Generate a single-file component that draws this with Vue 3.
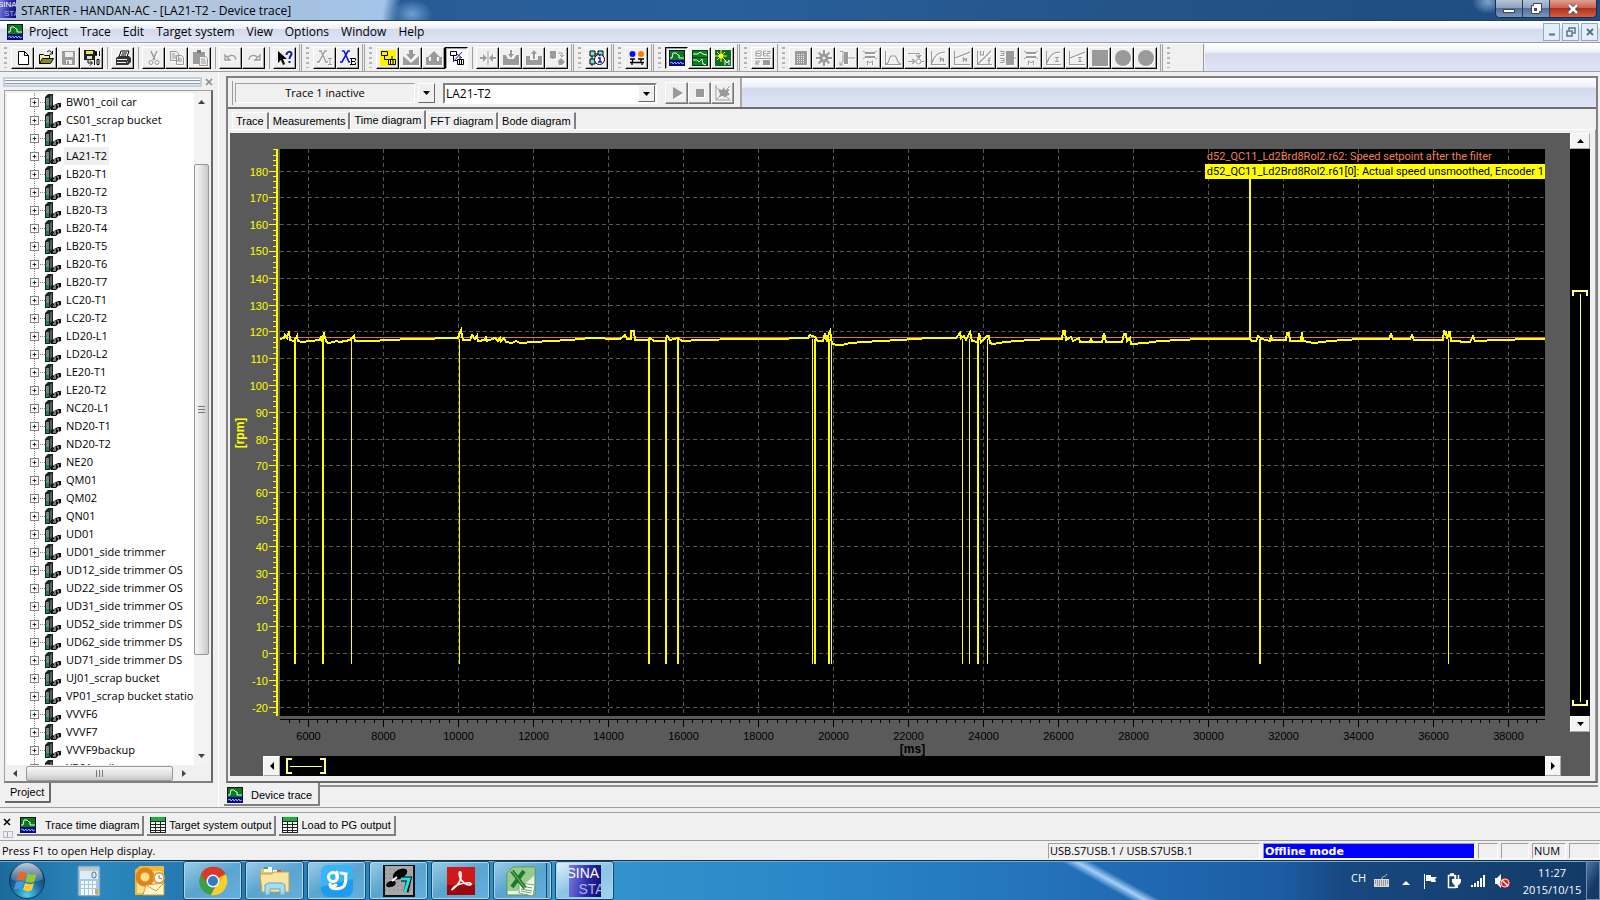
<script setup>
import { ref } from 'vue'

const menus = ['Project', 'Trace', 'Edit', 'Target system', 'View', 'Options', 'Window', 'Help']

const scope = '<rect width="16" height="16" fill="#0a1a10"/><rect x="1" y="1" width="14" height="9" fill="#0b7a1e"/><path d="M1 8h2l1-5h3l2 2h1v3h5" stroke="#e8ffe8" fill="none"/><rect y="10" width="16" height="6" fill="#0a0a80"/><path d="M1 13l2-1 1 2 2-2 1 2 2-2 1 2 2-2 1 2 2-1" stroke="#8fb4ff" fill="none"/>'
const sheet = '<rect x="0" y="0" width="16" height="16" fill="#222"/><rect x="1" y="0" width="14" height="4" fill="#18b040"/><path d="M1 5h4v2H1zM6 5h4v2H6zM11 5h4v2h-4zM1 8h4v2H1zM6 8h4v2H6zM11 8h4v2h-4zM1 11h4v2H1zM6 11h4v2H6zM11 11h4v2h-4zM1 14h4v1H1zM6 14h4v1H6zM11 14h4v1h-4z" fill="#f4f4f4"/>'
const G = '#9a9a9a'

const icons = {
  scope,
  sheet,
  drive: '<path d="M0 3l3-3h5v12l-3 4H0z" fill="#1c2422"/><path d="M1 4h3v7H1z" fill="#7a8480"/><path d="M1 11h3v4H1z" fill="#138078"/><path d="M5 3l2-2v10l-2 2z" fill="#59625f"/><path d="M6 13l3-2 2-1 2-1h3v4l-3 1-2 2H6z" fill="#111"/><path d="M9 12h2M12 11h2M8 14h3M13 13h1" stroke="#ddd"/>',
  new: '<path d="M3.500 1.500h6l4 4v9h-10z" fill="#fff" stroke="#000"/><path d="M9.500 1.500v4h4" fill="none" stroke="#000"/>',
  open: '<path d="M1.500 13.500v-9h4l1 1h5v3" fill="#f6f29a" stroke="#000"/><path d="M1.500 13.500l3-5h11l-3 5z" fill="#8c8c14" stroke="#000"/><path d="M9 2c2-2 4-1 5 1M14.500 1v3h-3" fill="none" stroke="#000"/>',
  save: `<path d="M1 1h13v14H2l-1-1z" fill="${G}"/><path d="M4 2h8v5H4zM5 10h6v4H5z" fill="#eee"/><path d="M6 11h2v3H6z" fill="${G}"/>`,
  saveall: '<path d="M0 0h11v10H0z" fill="#222"/><path d="M2 1h7v3H2z" fill="#e8e44c"/><path d="M3 6h5v3H3z" fill="#ddd"/><path d="M4 10v3h4M6 10.500l2.500 2.500L6 15.500" fill="none" stroke="#000"/><path d="M12.500 1.500h-1v4h1zM15.500 1v5M10.500 9v6M13 9.500h2v5h-2z" fill="none" stroke="#000"/>',
  print: '<path d="M4 7l2-6h8l-2 6z" fill="#fff" stroke="#000"/><path d="M1 8l3-2h10l2 2v4l-3 3H1z" fill="#333"/><path d="M2 9h10v1H2zM2 12h9v1H2z" fill="#eee"/><path d="M7 3h5M6 5h5" stroke="#000"/><path d="M12 12h1" stroke="#e8e400"/>',
  cut: `<path d="M5 1l4 9M11 1L7 10" stroke="${G}" stroke-width="1.500" fill="none"/><circle cx="5" cy="12.500" r="2" fill="none" stroke="${G}"/><circle cx="11" cy="12.500" r="2" fill="none" stroke="${G}"/>`,
  copy: `<path d="M1.500 1.500h6l2 2v7h-8zM7.500 5.500h5l2 2v7h-7z" fill="#efefef" stroke="${G}"/><path d="M3 4h3M3 6h4M3 8h4M9 9h4M9 11h4" stroke="${G}"/>`,
  paste: `<path d="M1 2h12v12H1z" fill="${G}"/><path d="M5 0h4v3H5z" fill="#777"/><path d="M7.500 6.500h6l2 2v7h-8z" fill="#efefef" stroke="${G}"/><path d="M9 9h4M9 11h5M9 13h5" stroke="${G}"/>`,
  undo: `<path d="M2 5v5h5zM4 8c3-4 9-3 9 2" fill="none" stroke="${G}" stroke-width="1.300"/>`,
  redo: `<path d="M14 5v5H9zM12 8C9 4 3 5 3 10" fill="none" stroke="${G}" stroke-width="1.300"/>`,
  help: '<path d="M1 1v12l3-3 2 5 2-1-2-5h4z" fill="#000"/><path d="M9.500 5c0-4 5-4 5-1 0 2-2 2-2 5M12.500 11v2" fill="none" stroke="#0a1ea0" stroke-width="2"/>',
  xi: `<path d="M2 1h2l5 11h2M10 1H8L2 12H0" fill="none" stroke="${G}" stroke-width="1.300"/><path d="M11 8.500h4M13 9v6M11 14.500h4" stroke="${G}"/>`,
  xe: '<path d="M2 1h2l5 11h1M10 1H8L2 12H0" fill="none" stroke="#0a14d2" stroke-width="1.600"/><path d="M10 8.500h5.500v2M11.500 8v7M10 14.500h5.500v-2M12 11.500h3" fill="none" stroke="#000"/>',
  net: '<rect width="16" height="16" fill="#fff200"/><path d="M1.500 1.500h6v4h-6zM4.500 5.500v4h4" fill="none" stroke="#000"/><path d="M8.500 9.500h7v5h-7zM10.500 9v6M13 9v6M12 9V6" fill="none" stroke="#000"/>',
  down: `<path d="M0 6l8 7 8-7v9H0z" fill="${G}"/><path d="M6 0h4v4h3l-5 6-5-6h3z" fill="${G}"/>`,
  up: `<path d="M0 7h3v4h10V7h3v8H0z" fill="${G}"/><path d="M8 1l6 6h-3v5H5V7H2z" fill="${G}"/>`,
  offline: '<path d="M1.500 1.500h6v4h-6zM4.500 5.500v5h4" fill="none" stroke="#000"/><path d="M8.500 9.500h6v5h-6zM10.500 9v6M12.500 9v6M11 9V7" fill="none" stroke="#000"/><path d="M4 12L13 2M8 4l5 4" stroke="#1818c8"/>',
  collapse: `<path d="M8 1v14" stroke="${G}"/><path d="M0 7h3V4l4 4-4 4V9H0zM16 7h-3V4L9 8l4 4V9h3z" fill="${G}"/>`,
  dl: `<path d="M0 5h3l2 4h6l2-4h3v10H0z" fill="${G}"/><path d="M7 0h2v4h2L8 8 5 4h2z" fill="${G}"/>`,
  ul: `<path d="M0 6h4v4h8V6h4v9H0z" fill="${G}"/><path d="M7 9h2V4h2L8 0 5 4h2z" fill="${G}"/>`,
  sync: `<path d="M1 1h6v7l-3 1-3-1zM9 11l3-3 4 4-3 3h-3z" fill="${G}"/><path d="M9 3h4v4M11 5l2 2 2-2" fill="none" stroke="${G}"/>`,
  info: '<path d="M1 1h5v5H1zM9 1h5v5H9zM1 9h5v5H1z" fill="#7ee0e0" stroke="#000"/><path d="M3 6v3M11 6v3M6 4h3M3 14v2" stroke="#000"/><circle cx="10.500" cy="9.500" r="5" fill="#fff" stroke="#000"/><path d="M9 8h2v4M9 12h4M10 5.500h1.500" stroke="#1010c8" fill="none" stroke-width="1.500"/>',
  balls: '<circle cx="3.500" cy="4" r="3" fill="#0808ff"/><circle cx="12" cy="4" r="3" fill="#ff7a00"/><path d="M1 9h5M9 9h6M3.500 9v3M12 9v3M1 12.500h14M3 12v3M13 12v3" stroke="#000" stroke-width="1.300"/>',
  measure: '<rect width="16" height="16" fill="#043a0c"/><rect x="1" y="1" width="14" height="6" fill="#0a8020"/><rect x="1" y="8" width="14" height="7" fill="#0a8020"/><path d="M1 4h5l2-2 3 2 4 1M1 10h4l2 2 3-3 1 5 3 1" stroke="#e8ffe8" fill="none"/>',
  auto: '<rect width="16" height="16" fill="#0a6c1c"/><path d="M6 0v12M0 6h12M2 2l8 8M10 2l-8 8" stroke="#ffff30"/><circle cx="6" cy="6" r="2.500" fill="#ffff30"/><path d="M10 15v-5l2 3 2-3v5" stroke="#fff" fill="none"/>',
  fe: `<path d="M1 3.500h4M3 1h3v5H1V2zM9 1h2M8.500 1v5h2.500M9 3.500h2M12 1.500h3v2h-3v2.500h3M0 8.500h16M1 15v-4h3v2H1l3 2" fill="none" stroke="${G}"/><path d="M8 10h7v5H8z" fill="${G}"/>`,
  grid: `<rect x="2" y="1" width="12" height="14" fill="${G}"/><path d="M4 4.500h8M4 6.500h8M4 8.500h8M4 10.500h8M4 12.500h8" stroke="#eee" stroke-dasharray="1 1"/>`,
  gear: `<path d="M8 0v16M0 8h16M2.500 2.500l11 11M13.500 2.500l-11 11" stroke="${G}" stroke-width="2"/><circle cx="8" cy="8" r="4.500" fill="${G}"/><circle cx="8" cy="8" r="1.500" fill="#eee"/>`,
  motor: `<path d="M5 2h4v12H5z" fill="${G}"/><path d="M1 1.500h3v3M9 8h7M4 5v7l-3 3M1 12v3h3" fill="none" stroke="${G}"/>`,
  brake: `<path d="M1 1l3 2h8l3-2M1 9l3-2h8l3 2" fill="none" stroke="${G}"/><path d="M3 2h10v2H3zM3 6h10v2H3z" fill="${G}"/><path d="M5.500 15v-4l2.500 2 2.500-2v4" fill="none" stroke="${G}"/>`,
  ramp: `<path d="M.5 1v13.500H16M1 14c4 0 3-8 5-8h4c2 0 2 8 6 8" fill="none" stroke="${G}" stroke-width="1.200"/>`,
  flow: `<path d="M0 3.500h11V7M8 5l3 3 2-3M0 11.500h6M4 9l3 2.500L4 14M13 11.500h3" fill="none" stroke="${G}" stroke-width="1.200"/><circle cx="10.500" cy="11.500" r="2.500" fill="none" stroke="${G}"/>`,
  curven: `<path d="M.5 1v13.500H15M1 13C3 5 7 2 14 2M9.500 12V8l3 3V8v4" fill="none" stroke="${G}" stroke-width="1.200"/>`,
  linen: `<path d="M.5 1v13.500H16M1 8l15-6M9.500 12V8l3 3V8v4" fill="none" stroke="${G}" stroke-width="1.200"/>`,
  uf: `<path d="M.5 1v13.500H15M1 14L14 1M3.500 1v4h3V1M14 8h-2v6M10.500 10.500h3" fill="none" stroke="${G}" stroke-width="1.200"/>`,
  mm: `<path d="M6 1h8v14H6z" fill="${G}"/><path d="M0 1.500h4v4H0M1 3.500h3M0 8.500h4v4H0M1 10.500h3M14 8h2" fill="none" stroke="${G}"/>`,
  curvei: `<path d="M.5 1v13.500H15M1 13C3 5 7 2 14 2M9 7.500h4M9 11.500h4M11 8v4" fill="none" stroke="${G}" stroke-width="1.200"/>`,
  linei: `<path d="M.5 1v13.500H16M1 8l15-6M9 7.500h4M9 11.500h4M11 8v4" fill="none" stroke="${G}" stroke-width="1.200"/>`,
  square: `<path d="M0 0h16v16H0z" fill="${G}"/>`,
  circle: `<circle cx="8" cy="8" r="8" fill="${G}"/>`,
  play: `<path d="M4 2l10 6-10 6z" fill="${G}"/>`,
  stop: `<path d="M4 4h8v8H4z" fill="${G}"/>`,
  clear: `<path d="M1 0v15h15M1 15L15 1M1 2l13 12" fill="none" stroke="${G}"/><path d="M3 4l4 1 2-3 1 3 5-1-2 3 2 3-4 1-1 2-2-2-4 1 1-3z" fill="${G}"/>`
}

const toolGroups = [
  [['new', 'open', 'save', 'saveall'], ['print'], ['cut', 'copy', 'paste'], ['undo', 'redo'], ['help']],
  [['xi', 'xe']],
  [['net', 'down', 'up', 'offline'], ['collapse', 'dl', 'ul', 'sync']],
  [['info']],
  [['balls']],
  [['scope', 'measure', 'auto']],
  [['fe']],
  [['grid', 'gear', 'motor', 'brake', 'ramp', 'flow', 'curven', 'linen', 'uf', 'mm', 'brake', 'curvei', 'linei', 'square', 'circle', 'circle']]
]
const pressed = ['offline', 'scope']
const coloured = ['new', 'open', 'saveall', 'print', 'help', 'xe', 'net', 'offline', 'info', 'balls', 'scope', 'measure', 'auto']

const devices = [
  'BW01_coil car', 'CS01_scrap bucket', 'LA21-T1', 'LA21-T2', 'LB20-T1', 'LB20-T2', 'LB20-T3', 'LB20-T4', 'LB20-T5',
  'LB20-T6', 'LB20-T7', 'LC20-T1', 'LC20-T2', 'LD20-L1', 'LD20-L2', 'LE20-T1', 'LE20-T2', 'NC20-L1', 'ND20-T1',
  'ND20-T2', 'NE20', 'QM01', 'QM02', 'QN01', 'UD01', 'UD01_side trimmer', 'UD12_side trimmer OS',
  'UD22_side trimmer OS', 'UD31_side trimmer OS', 'UD52_side trimmer DS', 'UD62_side trimmer DS',
  'UD71_side trimmer DS', 'UJ01_scrap bucket', 'VP01_scrap bucket station', 'VVVF6', 'VVVF7', 'VVVF9backup', 'XB01_coil car'
]
const selected = ref('LA21-T2')

const tabs = ['Trace', 'Measurements', 'Time diagram', 'FFT diagram', 'Bode diagram']
const activeTab = ref('Time diagram')

/* Plot space: one unit is one pixel at the default window size */
const W = 1265
const H = 567
const px = (ms) => 28.500 + (ms - 6000) * 0.0375
const py = (rpm) => Math.floor(504.500 - rpm * 2.68) + 0.500

const yMajor = Array.from({ length: 21 }, (_, i) => 180 - i * 10)
const yMinor = Array.from({ length: 106 }, (_, i) => 188 - i * 2).filter((v) => v % 10 && py(v) < H)
const xMajor = Array.from({ length: 17 }, (_, i) => 6000 + i * 2000)
const xMinor = Array.from({ length: 135 }, (_, i) => 5500 + i * 250).filter((v) => v % 2000 && px(v) < W)

const dips = [
  [15, 2], [43, 2], [72, 1], [180, 1], [369, 2], [386, 2], [398, 2], [533, 1], [535, 2], [549, 2], [552, 1],
  [683, 1], [690, 1], [698, 2], [708, 1], [980, 2], [1169, 1]
]

const actual = '0,190 4,189 5,186 7,189 9,182 10,191 14,192 17,187 18,192 22,193 30,192 40,191 41,187 42,191 44,185 46,192 48,194 54,193 56,192 60,193 70,191 74,187 75,192 90,192 110,191 130,190 150,190 160,189 178,189 179,186 181,181 183,191 190,191 192,186 195,190 197,187 198,192 205,191 206,187 207,192 215,189 218,192 220,189 221,192 224,189 226,193 232,194 236,192 240,194 255,193 270,192 290,191 310,189 340,190 345,186 347,190 351,190 351,182 354,182 355,191 368,191 370,189 374,192 385,192 387,187 390,191 398,189 402,192 420,191 460,190 490,190 528,189 530,186 535,188 538,192 543,192 545,184 547,193 549,184 550,182 552,195 558,196 562,196 570,194 585,193 600,192 620,191 650,189 676,189 680,184 681,189 684,187 686,191 690,183 692,192 698,193 699,184 701,193 707,187 709,187 710,194 713,195 725,193 750,191 770,190 782,190 783,182 785,182 786,191 791,188 793,192 799,189 800,193 810,193 811,189 812,193 822,193 824,184 826,193 842,193 844,185 846,185 847,192 850,189 851,195 865,194 880,192 900,191 920,190 950,190 970,190 972,192 976,192 978,187 982,190 990,192 991,186 992,191 1006,191 1007,184 1009,184 1010,192 1021,192 1022,183 1023,192 1034,194 1050,192 1080,190 1109,190 1111,185 1113,190 1130,190 1132,186 1134,191 1163,191 1164,182 1166,183 1167,190 1169,183 1170,183 1171,192 1190,193 1193,187 1195,192 1220,191 1250,190 1265,190'

const pctX = (v) => ({ left: (v / W) * 100 + '%' })
const pctY = (v) => ({ top: (v / H) * 100 + '%' })

const outputs = [
  { label: 'Trace time diagram', icon: 'scope', active: true },
  { label: 'Target system output', icon: 'sheet' },
  { label: 'Load to PG output', icon: 'sheet' }
]

const apps = {
  Chrome: '<circle cx="16" cy="16" r="14" fill="#e2b820"/><path d="M16 16L4 9a14 14 0 0 1 24.500 0z" fill="#d8392b"/><path d="M16 16L4 9a14 14 0 0 0 10 21l5-10z" fill="#38a048"/><path d="M14 30l6-10 8.500-10.500A14 14 0 0 1 14 30z" fill="#f4d030"/><path d="M16 9h12.500A14 14 0 0 0 4 9l5 8z" fill="#d8392b"/><circle cx="16" cy="16" r="6.500" fill="#f4f6f8"/><circle cx="16" cy="16" r="5" fill="#3478c8"/>',
  Explorer: '<path d="M2 4h10l2 3h14v19H2z" fill="#e8c468"/><path d="M5 2h8v5H5z" fill="#fff"/><path d="M5 2h4v2H5z" fill="#38b050"/><path d="M14 5h8v5h-8z" fill="#fff"/><path d="M18 5h4v2h-4z" fill="#e04030"/><path d="M1 9h12l2-2h15v20H3z" fill="#f8e6a0" stroke="#c8a040"/><path d="M6 30V20l3-2h14l3 2v10h-5v-6H11v6z" fill="#9edcf4" fill-opacity=".9" stroke="#5aa8d0"/>',
  Messenger: '<rect width="32" height="32" rx="8" fill="#1c9cf0"/><path d="M0 8a8 8 0 0 1 8-8h16a8 8 0 0 1 8 8v6L0 22z" fill="#38b4f8"/><circle cx="12" cy="12" r="4.500" fill="none" stroke="#fff" stroke-width="3"/><path d="M16 7v6M9 19c0 6 10 6 14 2 3-4 1-8 2-12l-5-1M10 22l5-2" fill="none" stroke="#fff" stroke-width="3" stroke-linecap="round"/>',
  Step7: '<rect width="32" height="32" fill="#111"/><rect x="2" y="1" width="28" height="29" fill="#a8a8a8"/><path d="M2 5h28M2 9h28M2 13h28M2 17h28M2 21h28M2 25h28" stroke="#888" stroke-dasharray="2 2"/><ellipse cx="17" cy="9" rx="8" ry="4.500" transform="rotate(-30 17 9)" fill="#000"/><ellipse cx="8" cy="19" rx="5" ry="3" transform="rotate(-20 8 19)" fill="#000"/><path d="M9 16l5-4" stroke="#fff" stroke-width="2"/><path d="M18 14h8l-3 13" fill="none" stroke="#000" stroke-width="5"/><path d="M18 14h8l-4 13" fill="none" stroke="#10e8e8" stroke-width="3"/>',
  Reader: '<rect x="2" y="2" width="28" height="28" fill="#d01818"/><path d="M2 20h28v10H2z" fill="#98080c"/><path d="M8 24c6-4 9-11 8-16-1-3-3 0-1 5 2 4 6 7 9 7 4 0 2-3-3-2-5 0-9 2-12 4-2 2-3 4-1 2z" fill="none" stroke="#fff" stroke-width="1.600"/>',
  Excel: '<path d="M2 8L8 2h22v28H2z" fill="#e8f4e4" stroke="#489850"/><path d="M2 8L8 2h22v8L12 26H2z" fill="#78b868" fill-opacity=".7"/><path d="M14 18l16 2-2 11-14-3z" fill="#fff" stroke="#78a078"/><path d="M16 21l11 2M16 24l11 2M16 26l10 2" stroke="#58a058"/><path d="M7 6l13 17M19 6L7 22" stroke="#1c7830" stroke-width="4"/><path d="M7 6l13 17" stroke="#80c850" stroke-width="1"/>'
}
const quick = {
  Calculator: '<rect x="5" y="1" width="22" height="30" rx="1" fill="#a4c8e4" stroke="#6890b4"/><path d="M7 4h18v10H7z" fill="#dcecf8"/><path d="M7 5h18" stroke="#c8a868"/><rect x="19" y="7" width="4" height="6" rx="2" fill="none" stroke="#4878a8"/><path d="M8 17.500h16M8 21.500h16M8 25.500h16M8 28.500h16" stroke="#f4faff" stroke-width="3" stroke-dasharray="3 1"/><path d="M22 24h3v5h-3z" fill="#e8a040"/>',
  Outlook: '<path d="M1 5l5-4h24v29H1z" fill="#f4b838"/><path d="M3 6h25v22H3z" fill="#fce090"/><circle cx="11" cy="12" r="7" fill="none" stroke="#e08418" stroke-width="5"/><path d="M12 20l18-2v12H9z" fill="#fff4d0" stroke="#d89830"/><path d="M12 20l10 6 8-8" fill="none" stroke="#d89830"/><circle cx="25" cy="13" r="5" fill="#fff" stroke="#d8a050" stroke-width="2"/><path d="M25 10v3l3 1" fill="none" stroke="#a06020"/>'
}
</script>

<template>
  <div class="window">
    <header class="title">
      <span class="brand small" aria-hidden="true"><b>SINA</b><i>STA</i></span>
      <h1>STARTER - HANDAN-AC - [LA21-T2 - Device trace]</h1>
      <div class="win-controls">
        <button aria-label="Minimize"><svg width="14" height="14" viewBox="0 0 14 14"><rect x="1.500" y="7.500" width="11" height="3" fill="#fff" stroke="#445" /></svg></button>
        <button aria-label="Restore"><svg width="14" height="14" viewBox="0 0 14 14"><path d="M4.500 1.500h8v8h-2v2h-8v-8h2z" fill="#fff" stroke="#445" /><rect x="5.500" y="6.500" width="2" height="2" fill="#456" stroke="#445" /></svg></button>
        <button class="close" aria-label="Close"><svg width="14" height="14" viewBox="0 0 14 14"><path d="M3 3l8 8M11 3l-8 8" stroke="#445" stroke-width="4" /><path d="M3 3l8 8M11 3l-8 8" stroke="#fff" stroke-width="2.500" /></svg></button>
      </div>
    </header>

    <nav class="menu">
      <svg class="icon" width="16" height="16" viewBox="0 0 16 16" v-html="icons.scope"></svg>
      <button v-for="m in menus" :key="m" class="menu-item">{{ m }}</button>
      <div class="mdi">
        <button aria-label="Minimize document"><svg width="12" height="12" viewBox="0 0 12 12"><path d="M3 8.500h6" stroke="#5b7388" stroke-width="2" /></svg></button>
        <button aria-label="Restore document"><svg width="12" height="12" viewBox="0 0 12 12"><path d="M4 4V2h6v5H8M2 5h5v5H2z" fill="none" stroke="#5b7388" stroke-width="1.500" /></svg></button>
        <button aria-label="Close document"><svg width="12" height="12" viewBox="0 0 12 12"><path d="M3 3l6 6M9 3l-6 6" stroke="#5b7388" stroke-width="2" /></svg></button>
      </div>
    </nav>

    <div class="toolbar">
      <div v-for="(group, g) in toolGroups" :key="g" class="tool-group">
        <span class="grip"></span>
        <div v-for="(set, s) in group" :key="s" class="tool-set">
          <button v-for="(name, n) in set" :key="n" class="tool" :class="{ pressed: pressed.includes(name), disabled: !coloured.includes(name) }" :aria-label="name">
            <svg width="16" height="16" viewBox="0 0 16 16" v-html="icons[name]"></svg>
          </button>
        </div>
      </div>
      <div class="tool-group last"><span class="grip"></span></div>
      <div class="fill"></div>
    </div>

    <main class="main">
      <aside class="side">
        <div class="drag">
          <span class="drag-bar"></span>
          <button aria-label="Close panel"><svg width="8" height="8" viewBox="0 0 8 8"><path d="M1 1l6 6M7 1L1 7" stroke="#888" stroke-width="1.500" /></svg></button>
        </div>
        <div class="tree-box">
          <div class="tree-view">
            <ul class="tree">
              <li v-for="d in devices" :key="d">
                <button class="plus" :aria-label="'Expand ' + d"><svg width="9" height="9" viewBox="0 0 9 9"><path d="M2 4.500h5M4.500 2v5" stroke="#000" /></svg></button>
                <svg class="drive" width="16" height="16" viewBox="0 0 16 16" v-html="icons.drive"></svg>
                <button class="device" :class="{ selected: d === selected }" @click="selected = d">{{ d }}</button>
              </li>
            </ul>
            <div class="vbar">
              <svg width="7" height="4" viewBox="0 0 7 4"><path d="M0 4l3.500-4L7 4z" fill="#444" /></svg>
              <div class="vtrack"><div class="vthumb"><span></span></div></div>
              <svg width="7" height="4" viewBox="0 0 7 4"><path d="M0 0l3.500 4L7 0z" fill="#444" /></svg>
            </div>
          </div>
          <div class="hbar">
            <svg width="4" height="7" viewBox="0 0 4 7"><path d="M4 0L0 3.500 4 7z" fill="#444" /></svg>
            <div class="hthumb"><span></span></div>
            <svg width="4" height="7" viewBox="0 0 4 7"><path d="M0 0l4 3.500L0 7z" fill="#444" /></svg>
          </div>
        </div>
        <div class="under-tabs"><button class="under-tab">Project</button></div>
      </aside>

      <section class="document">
        <div class="frame">
          <div class="trace-bar">
            <span class="edge"></span>
            <div class="trace-state">Trace 1 inactive</div>
            <button class="drop" aria-label="Choose trace"><svg width="7" height="4" viewBox="0 0 7 4"><path d="M0 0h7L3.500 4z" /></svg></button>
            <div class="combo">
              <select aria-label="Device"><option>LA21-T2</option></select>
              <span class="drop"><svg width="7" height="4" viewBox="0 0 7 4"><path d="M0 0h7L3.500 4z" /></svg></span>
            </div>
            <button v-for="n in ['play', 'stop', 'clear']" :key="n" class="tool soft disabled" :aria-label="n"><svg width="16" height="16" viewBox="0 0 16 16" v-html="icons[n]"></svg></button>
            <div class="fill"></div>
          </div>

          <div class="tabs" role="tablist">
            <button v-for="t in tabs" :key="t" role="tab" :aria-selected="t === activeTab" :class="{ active: t === activeTab }" @click="activeTab = t">{{ t }}</button>
          </div>

          <div class="pane">
            <div class="chart">
              <div class="y-axis">
                <svg class="stretch" :viewBox="`0 0 49 ${H}`" preserveAspectRatio="none">
                  <path :d="`M46 0V${H}`" stroke-width="2" />
                  <path v-for="v in yMajor" :key="v" :d="`M38 ${py(v)}H45`" />
                  <path v-for="v in yMinor" :key="'m' + v" :d="`M42 ${py(v)}H45`" />
                </svg>
                <span v-for="v in yMajor" :key="v" class="y-label" :style="pctY(py(v))">{{ v }}</span>
                <span class="y-unit">[rpm]</span>
              </div>

              <div class="plot">
                <svg class="stretch" :viewBox="`0 0 ${W} ${H}`" preserveAspectRatio="none">
                  <g class="grid-lines">
                    <path v-for="v in yMajor" :key="v" :d="`M0 ${py(v)}H${W}`" />
                    <path v-for="v in xMajor" :key="'x' + v" :d="`M${px(v)} 0V${H}`" />
                  </g>
                  <path class="setpoint" :d="`M0 188.500H${W}`" />
                  <polyline class="actual" :points="actual" />
                  <rect v-for="d in dips" :key="d[0]" class="dip" :x="d[0] - 1" y="190" :width="d[1]" height="325" />
                  <rect class="dip" x="969" y="29" width="2" height="162" />
                </svg>
                <div class="legend">
                  <span class="l-setpoint">d52_QC11_Ld2Brd8Rol2.r62: Speed setpoint after the filter</span>
                  <span class="l-actual">d52_QC11_Ld2Brd8Rol2.r61[0]: Actual speed unsmoothed, Encoder 1</span>
                </div>
              </div>

              <div class="x-axis">
                <svg class="stretch" :viewBox="`0 0 ${W} 40`" preserveAspectRatio="none">
                  <path :d="`M0 3.500H${W}`" />
                  <path v-for="v in xMajor" :key="v" :d="`M${px(v)} 3V11`" />
                  <path v-for="v in xMinor" :key="'m' + v" :d="`M${px(v)} 3V7`" />
                </svg>
                <span v-for="v in xMajor" :key="v" class="x-label" :style="pctX(px(v))">{{ v }}</span>
                <span class="x-unit">[ms]</span>
              </div>

              <button class="step s-up" aria-label="Scroll up"><svg width="7" height="4" viewBox="0 0 7 4"><path d="M0 4l3.500-4L7 4z" /></svg></button>
              <div class="v-zoom"><div class="v-range"></div></div>
              <button class="step s-down" aria-label="Scroll down"><svg width="7" height="4" viewBox="0 0 7 4"><path d="M0 0h7L3.500 4z" /></svg></button>
              <button class="step s-left" aria-label="Scroll left"><svg width="4" height="8" viewBox="0 0 4 8"><path d="M4 0L0 4l4 4z" /></svg></button>
              <div class="h-zoom"><div class="h-range"></div></div>
              <button class="step s-right" aria-label="Scroll right"><svg width="4" height="8" viewBox="0 0 4 8"><path d="M0 0l4 4-4 4z" /></svg></button>
            </div>
          </div>
        </div>
        <div class="doc-tabs">
          <button class="doc-tab"><svg width="16" height="16" viewBox="0 0 16 16" v-html="icons.scope"></svg>Device trace</button>
          <span class="doc-rest"></span>
        </div>
      </section>
    </main>

    <div class="outputs">
      <div class="dock">
        <button aria-label="Close output"><svg width="8" height="8" viewBox="0 0 8 8"><path d="M1 1l6 6M7 1L1 7" stroke="#000" stroke-width="1.500" /></svg></button>
        <span class="pin"></span>
      </div>
      <button v-for="o in outputs" :key="o.label" class="out-tab" :class="{ active: o.active }"><svg width="16" height="16" viewBox="0 0 16 16" v-html="icons[o.icon]"></svg>{{ o.label }}</button>
    </div>

    <footer class="status">
      <span class="hint">Press F1 to open Help display.</span>
      <span class="cell usb">USB.S7USB.1 / USB.S7USB.1</span>
      <span class="cell offline">Offline mode</span>
      <span class="cell s1"></span>
      <span class="cell s2"></span>
      <span class="cell num">NUM</span>
      <span class="cell s3"></span>
    </footer>

    <div class="taskbar">
      <button class="start" aria-label="Start">
        <svg width="38" height="38" viewBox="0 0 38 38">
          <defs>
            <radialGradient id="orb" cx=".5" cy=".9" r=".9"><stop offset="0" stop-color="#4cd0f0" /><stop offset=".5" stop-color="#1c6498" /><stop offset="1" stop-color="#0c3054" /></radialGradient>
            <linearGradient id="shine" x2="0" y2="1"><stop offset="0" stop-color="#fff" stop-opacity=".75" /><stop offset="1" stop-color="#fff" stop-opacity=".1" /></linearGradient>
          </defs>
          <circle cx="19" cy="19" r="17.500" fill="url(#orb)" stroke="#0c3858" />
          <path d="M3 17a16 16 0 0 1 32 0c-9 5-22 5-32 0z" fill="url(#shine)" />
          <path d="M11 11c3-2 5-1 7 0l-2 8c-2-1-5-2-8 0z" fill="#f0642c" />
          <path d="M19.500 11.500c3 1 6 2 9 0l-2 8c-3 2-6 1-9 0z" fill="#94c83c" />
          <path d="M8 20.500c3-2 5-1 8 0l-2 7c-3-1-5-1-8 0z" fill="#3c9ce4" />
          <path d="M17 21c3 1 6 2 9 0l-2 7c-3 2-6 1-9 0z" fill="#fccc34" />
        </svg>
      </button>
      <button v-for="(svg, name) in quick" :key="name" class="quick" :aria-label="name"><svg width="32" height="32" viewBox="0 0 32 32" v-html="svg"></svg></button>
      <button v-for="(svg, name) in apps" :key="name" class="task" :class="{ stacked: name === 'Excel' }" :aria-label="name"><svg width="32" height="32" viewBox="0 0 32 32" v-html="svg"></svg></button>
      <button class="task current" aria-label="Starter"><span class="brand"><b>SINA</b><i>STA</i></span></button>

      <div class="tray">
        <span class="lang">CH</span>
        <svg width="16" height="16" viewBox="0 0 16 16"><path d="M0 6h15v8H0z" fill="#d8d8d8" /><path d="M1 8h13M1 10h13M3 12h9" stroke="#555" stroke-dasharray="1 1" /><path d="M8 6c0-4 3-1 5-5" stroke="#ccc" fill="none" /></svg>
        <svg class="more" width="8" height="4" viewBox="0 0 8 4"><path d="M0 4l4-4 4 4z" fill="#fff" /></svg>
        <svg width="16" height="16" viewBox="0 0 16 16"><path d="M2 1h1v15H2z" fill="#fff" /><path d="M4 2h5v2h6l-2 2 1 3H9V8H4z" fill="#fff" /></svg>
        <svg width="16" height="16" viewBox="0 0 16 16"><path d="M2.500 2.500h7v12h-7zM4 1h4" fill="none" stroke="#fff" stroke-width="1.500" /><path d="M6 6h9v3l-2 3h-1v3H9v-3H8L6 9z" fill="#fff" /><path d="M9 2v4M12.500 2v4" stroke="#fff" stroke-width="1.500" /></svg>
        <svg width="16" height="16" viewBox="0 0 16 16"><path d="M1 12h2v2H1zM4 10h2v4H4zM7 8h2v6H7zM10 5h2v9h-2zM13 2h2v12h-2z" fill="#fff" /></svg>
        <svg width="16" height="16" viewBox="0 0 16 16"><path d="M1 5h2l4-4v14l-4-4H1z" fill="#fff" /><circle cx="11" cy="10" r="5" fill="#d82020" /><path d="M8 7l6 6" stroke="#fff" stroke-width="1.500" /><circle cx="11" cy="10" r="4" fill="none" stroke="#f8d0d0" /></svg>
        <div class="clock"><span>11:27</span><span>2015/10/15</span></div>
        <button class="desk" aria-label="Show desktop"></button>
      </div>
    </div>
  </div>
</template>

<style>
html,
body {
  margin: 0;
  background: #f0f0f0;
}
</style>

<style scoped>
* {
  box-sizing: border-box;
}
button {
  font: inherit;
  color: inherit;
  margin: 0;
  padding: 0;
  border: 0;
  background: none;
}
svg {
  display: block;
  flex: none;
}
.window {
  height: 100vh;
  min-height: 600px;
  display: flex;
  flex-direction: column;
  overflow: hidden;
  background: #f0f0f0;
  color: #000;
  font: 11px/14px 'Open Sans', 'Noto Sans', sans-serif;
}

/* title */
.title {
  height: 21px;
  flex: none;
  display: flex;
  align-items: flex-start;
  padding-right: 3px;
  border-bottom: 1px solid #24405c;
  background:
    radial-gradient(20px 14px at 412px 14px, #6f9fd0, transparent) no-repeat,
    radial-gradient(16px 12px at 93% 2px, #7fa4cc, transparent) no-repeat,
    linear-gradient(100deg, #a9bdd6 0, #b9cadf 10%, #a5c0e0 18%, #a3c5ea 24%, #285c96 25%, #28609c 45%, #245488 70%, #1f4b80 100%);
}
.title h1 {
  flex: 1;
  margin: 0;
  padding: 3px 0 0 5px;
  font: 12px/16px 'Open Sans', 'Noto Sans', sans-serif;
  white-space: nowrap;
}
.brand {
  position: relative;
  display: block;
  flex: none;
  width: 32px;
  height: 32px;
  overflow: hidden;
  background: linear-gradient(100deg, #7c7ce8, #2828a0 60%, #0c0c70);
  color: #fff;
  font: 14px/16px 'Liberation Sans', Arial, sans-serif;
  text-align: left;
}
.brand b,
.brand i {
  display: block;
  font-style: normal;
  white-space: nowrap;
}
.brand b {
  font-weight: 400;
  margin-left: -2px;
}
.brand i {
  padding-left: 10px;
  color: #b0b0f0;
}
.brand.small {
  width: 16px;
  height: 18px;
  font-size: 8px;
  line-height: 9px;
}
.brand.small i {
  padding-left: 4px;
}
.win-controls {
  display: flex;
  height: 18px;
  border: 1px solid #1c2c44;
  border-top: 0;
  border-radius: 0 0 5px 5px;
  overflow: hidden;
}
.win-controls button {
  width: 27px;
  display: flex;
  align-items: center;
  justify-content: center;
  border-right: 1px solid #2c3c54;
  background: linear-gradient(#b4c4d8, #8fa4c0 45%, #52709a 50%, #7c98bc);
}
.win-controls .close {
  width: 46px;
  border: 0;
  background: linear-gradient(#e0a090, #cc6450 45%, #b0301c 50%, #d46040);
}

/* menu */
.menu {
  height: 22px;
  flex: none;
  display: flex;
  align-items: center;
  padding: 0 2px 0 7px;
  border-bottom: 1px solid #98a0ac;
  background: linear-gradient(#fff, #eef1fa 35%, #d5dbee 40%, #dfe4f5);
  font: 12px/16px 'Open Sans', 'Noto Sans', sans-serif;
}
.menu-item {
  padding: 0 6px;
}
.mdi {
  margin-left: auto;
  display: flex;
  gap: 2px;
}
.mdi button {
  width: 17px;
  height: 18px;
  display: grid;
  place-items: center;
  border: 1px solid #93a9bd;
  background: #e4eefb;
}

/* toolbar */
.toolbar {
  height: 29px;
  flex: none;
  display: flex;
  border-top: 1px solid #fff;
  border-bottom: 1px solid #a0a0a0;
}
.tool-group {
  display: flex;
  align-items: center;
  padding-right: 3px;
  border-right: 3px double #a0a0a0;
}
.tool-group:nth-child(7) {
  border-right: 1px solid #a0a0a0;
}
.tool-group.last {
  width: 41px;
  padding: 0;
  border-right: 1px solid #999;
  margin-right: 1px;
}
.grip {
  width: 3px;
  height: 21px;
  margin: 0 4px;
  background: repeating-linear-gradient(#b4b4b4 0 2px, transparent 2px 5px);
}
.tool-group .tool-set + .tool-set {
  margin-left: 4px;
  padding-left: 3px;
  border-left: 1px solid #a0a0a0;
}
.tool-set {
  display: flex;
}
.tool {
  width: 23px;
  height: 22px;
  display: grid;
  place-items: center;
  border: 1px solid #fff;
  border-right: 1px solid #000;
  border-bottom: 1px solid #000;
  box-shadow: inset -1px -1px #a0a0a0;
}
.tool.pressed {
  border-color: #000 #fff #fff #000;
  background: #fafafa;
  box-shadow: inset 1px 1px #a0a0a0;
}
.tool.soft {
  border-color: #fff #777 #777 #fff;
}
.tool.disabled svg {
  filter: drop-shadow(1px 1px 0 #fff);
}
.fill {
  flex: 1;
  background: linear-gradient(#fff, #edf1f9 30%, #d4daec 36%, #e0e5f6);
}

/* main */
.main {
  flex: 1;
  min-height: 0;
  display: flex;
  border-bottom: 1px solid #a0a0a0;
}
.side {
  width: 219px;
  flex: none;
  display: flex;
  flex-direction: column;
  padding: 4px 5px 4px 3px;
  border-right: 1px solid #fff;
}
.drag {
  display: flex;
  align-items: center;
  gap: 3px;
  height: 12px;
  margin-bottom: 2px;
}
.drag-bar {
  width: 199px;
  height: 10px;
  border: 2px solid #c2d0de;
  background: repeating-linear-gradient(#fff 0 1px, #8c9cb0 1px 2px, #e8ecf2 2px 3px);
}
.tree-box {
  flex: 1;
  min-height: 0;
  display: flex;
  flex-direction: column;
  margin-left: 1px;
  padding: 2px 2px 0 2px;
  border: 1px solid #a0a0a0;
  border-right: 2px solid #696969;
  border-bottom: 2px solid #808080;
}
.tree-view {
  flex: 1;
  min-height: 0;
  display: flex;
}
.tree {
  flex: 1;
  min-width: 0;
  margin: 0;
  padding: 0;
  overflow: hidden;
  list-style: none;
  background: #fff;
  font-family: 'Open Sans', 'Noto Sans', sans-serif;
}
.tree li {
  display: flex;
  align-items: center;
  height: 18px;
  padding-left: 23px;
  background: repeating-linear-gradient(#888 0 1px, transparent 1px 2px) 27px 0 / 1px 18px no-repeat;
}
.plus {
  display: block;
  flex: none;
  margin-right: 6px;
  border: 1px solid #848484;
  background: #fff;
  position: relative;
}
.plus svg {
  width: 7px;
  height: 7px;
}
.plus::after {
  content: '';
  position: absolute;
  left: 9px;
  top: 3px;
  width: 5px;
  border-top: 1px dotted #888;
}
.device {
  margin-left: 3px;
  padding: 0 2px;
  height: 18px;
  white-space: nowrap;
}
.device.selected {
  background: #f0f0f0;
}
.vbar {
  width: 15px;
  display: flex;
  flex-direction: column;
  align-items: center;
  padding: 7px 0;
  background: #f3f3f3;
}
.vtrack {
  flex: 1;
  width: 100%;
  display: flex;
  padding: 60px 0 99px;
}
.vthumb,
.hthumb {
  display: grid;
  place-items: center;
  flex: 1;
  border: 1px solid #979797;
  border-radius: 2px;
  background: linear-gradient(90deg, #f6f6f6, #e4e4e6 50%, #c8c8cc);
}
.vthumb span {
  width: 7px;
  height: 7px;
  background: repeating-linear-gradient(#777 0 1px, transparent 1px 3px);
}
.hbar {
  height: 16px;
  display: flex;
  align-items: center;
  padding: 1px 23px 0 6px;
  gap: 9px;
}
.hthumb {
  height: 15px;
  background: linear-gradient(#f6f6f6, #e4e4e6 50%, #c8c8cc);
}
.hthumb span {
  width: 8px;
  height: 7px;
  background: repeating-linear-gradient(90deg, #777 0 1px, transparent 1px 3px);
}
.under-tabs {
  display: flex;
  height: 20px;
  padding-left: 2px;
}
.under-tab {
  padding: 0 5px;
  border: solid #696969;
  border-width: 0 2px 2px 0;
  font: 11px/14px 'Liberation Sans', Arial, sans-serif;
  border-radius: 0 0 2px 0;
}

.document {
  flex: 1;
  min-width: 0;
  display: flex;
  flex-direction: column;
  padding: 4px 2px 0 7px;
  font: 11px/14px 'Liberation Sans', Arial, sans-serif;
}
.frame {
  flex: 1;
  min-height: 0;
  display: flex;
  flex-direction: column;
  border: 2px solid #808080;
  border-bottom-color: #696969;
}
.trace-bar {
  height: 31px;
  flex: none;
  display: flex;
  align-items: center;
  padding-left: 3px;
  border-bottom: 2px solid #707070;
}
.edge {
  width: 2px;
  height: 24px;
  margin-right: 2px;
  border-right: 1px solid #999;
}
.trace-state {
  width: 180px;
  height: 20px;
  padding-top: 2px;
  text-align: center;
  border: 1px solid;
  border-color: #a0a0a0 #fff #fff #a0a0a0;
  margin-right: 3px;
  font-family: 'Open Sans', 'Noto Sans', sans-serif;
}
.drop {
  width: 17px;
  height: 20px;
  display: grid;
  place-items: center;
  border: 1px solid;
  border-color: #fff #696969 #696969 #fff;
  background: #f0f0f0;
}
.combo {
  position: relative;
  width: 214px;
  height: 21px;
  margin: 2px 8px 0 8px;
  border: 2px solid;
  border-color: #808080 #fff #fff #808080;
  background: #fff;
}
.combo select {
  appearance: none;
  width: 100%;
  height: 100%;
  padding: 0 0 0 1px;
  border: 0;
  background: #fff;
  font: 12px/16px 'Open Sans', 'Noto Sans', sans-serif;
  color: #000;
}
.combo .drop {
  position: absolute;
  right: 0;
  top: 0;
  height: 17px;
  pointer-events: none;
}
.trace-bar .fill {
  align-self: stretch;
  margin-left: 6px;
  border-left: 2px solid #a8a8a8;
}
.tabs {
  height: 20px;
  flex: none;
  display: flex;
  align-items: flex-end;
  padding-left: 4px;
}
.tabs button {
  height: 17px;
  padding: 0 3px 1px;
  border-right: 2px solid #808080;
  border-top: 1px solid #fff;
  border-left: 1px solid #fff;
}
.tabs .active {
  height: 19px;
}
.pane {
  flex: 1;
  min-height: 0;
  display: flex;
  padding: 3px 5px 5px 2px;
  border-top: 1px solid #fff;
  border-right: 1px solid #a0a0a0;
}
.chart {
  flex: 1;
  min-width: 0;
  display: grid;
  grid-template-columns: 50px minmax(0, 1fr) 25px 20px;
  grid-template-rows: 16px minmax(0, 1fr) 40px 20px;
  background: #5a5a5a;
}
.stretch {
  position: absolute;
  inset: 0;
  width: 100%;
  height: 100%;
  shape-rendering: crispEdges;
}
.y-axis {
  grid-area: 2 / 1;
  position: relative;
  color: #ff0;
}
.y-axis path {
  stroke: #ff0;
}
.y-label {
  position: absolute;
  right: 12px;
  transform: translateY(-50%);
}
.y-unit {
  position: absolute;
  left: 3px;
  top: 50%;
  writing-mode: vertical-rl;
  transform: translateY(-50%) rotate(180deg);
  font-weight: 700;
  font-size: 12px;
}
.plot {
  grid-area: 2 / 2;
  position: relative;
  background: #000;
  overflow: hidden;
}
.grid-lines path {
  stroke: #585858;
  stroke-dasharray: 4 3;
}
.setpoint {
  stroke: #e07830;
}
.actual {
  fill: none;
  stroke: #ff0;
  stroke-width: 2;
}
.dip {
  fill: #ff0;
}
.legend {
  position: absolute;
  right: 0;
  top: 0;
  display: flex;
  flex-direction: column;
  white-space: nowrap;
  font-family: Roboto, 'Liberation Sans', sans-serif;
}
.legend span {
  height: 15px;
  line-height: 15px;
  padding: 0 1px 0 2px;
}
.l-setpoint {
  color: #f08050;
}
.l-actual {
  background: #ff0;
  color: #000;
}
.x-axis {
  grid-area: 3 / 2;
  position: relative;
}
.x-axis path {
  stroke: #000;
}
.x-label {
  position: absolute;
  top: 13px;
  transform: translateX(-50%);
}
.x-unit {
  position: absolute;
  left: 50%;
  top: 26px;
  transform: translateX(-50%);
  font-weight: 700;
  font-size: 12px;
}
.step {
  display: grid;
  place-items: center;
  background: #f4f4f4;
  border: 1px solid;
  border-color: #fff #aaa #aaa #fff;
}
.s-up {
  grid-area: 1 / 4;
}
.s-down {
  grid-area: 3 / 4;
  height: 16px;
}
.s-left {
  grid-area: 4 / 1;
  justify-self: end;
  width: 17px;
}
.s-right {
  grid-area: 4 / 3;
  width: 16px;
}
.v-zoom {
  grid-area: 2 / 4;
  background: #000;
  display: flex;
  padding: 141px 2px 10px;
}
.v-range,
.h-range {
  flex: 1;
  border: 2px solid #ffff90;
}
.v-range {
  border-width: 2px 0;
  background:
    linear-gradient(#ffff90, #ffff90) 0 0 / 2px 4px no-repeat,
    linear-gradient(#ffff90, #ffff90) 100% 0 / 2px 4px no-repeat,
    linear-gradient(#ffff90, #ffff90) 0 100% / 2px 4px no-repeat,
    linear-gradient(#ffff90, #ffff90) 100% 100% / 2px 4px no-repeat,
    linear-gradient(#ffff90, #ffff90) 50% 50% / 1px calc(100% - 4px) no-repeat;
}
.h-zoom {
  grid-area: 4 / 2;
  background: #000;
  display: flex;
  padding: 2px 6px;
}
.h-range {
  flex: 0 0 40px;
  border-width: 0 2px;
  background:
    linear-gradient(#ffff90, #ffff90) 0 0 / 4px 2px no-repeat,
    linear-gradient(#ffff90, #ffff90) 100% 0 / 4px 2px no-repeat,
    linear-gradient(#ffff90, #ffff90) 0 100% / 4px 2px no-repeat,
    linear-gradient(#ffff90, #ffff90) 100% 100% / 4px 2px no-repeat,
    linear-gradient(#ffff90, #ffff90) 50% 50% / calc(100% - 4px) 1px no-repeat;
}
.doc-tabs {
  height: 24px;
  flex: none;
  display: flex;
  margin-left: -2px;
  padding-bottom: 1px;
}
.doc-tab {
  display: flex;
  align-items: center;
  gap: 8px;
  padding: 2px 6px 0 3px;
  border: solid #808080;
  border-width: 0 2px 2px 0;
}
.doc-rest {
  flex: 1;
  margin-top: 2px;
  border-top: 2px solid #909090;
}

/* output bar */
.outputs {
  height: 29px;
  flex: none;
  display: flex;
  gap: 3px;
  margin-top: 4px;
  padding: 3px 0 0;
  border-top: 1px solid #a0a0a0;
  border-bottom: 1px solid #a0a0a0;
  font: 11px/14px 'Liberation Sans', Arial, sans-serif;
}
.dock {
  width: 14px;
  display: flex;
  flex-direction: column;
  gap: 5px;
  padding: 2px 0 0 3px;
}
.pin {
  width: 10px;
  height: 7px;
  border: 1px solid #b0bccc;
  background: linear-gradient(90deg, transparent 3px, #9aa8b8 3px 4px, transparent 4px);
}
.out-tab {
  height: 20px;
  display: flex;
  align-items: center;
  gap: 3px;
  padding: 0 3px;
  border: solid #808080;
  border-width: 0 2px 2px 0;
}
.out-tab.active {
  gap: 9px;
}

/* status */
.status {
  height: 19px;
  flex: none;
  display: flex;
  gap: 3px;
  padding: 2px 0 1px;
  line-height: 15px;
}
.hint {
  flex: 1;
  padding-left: 2px;
}
.cell {
  border: 1px solid;
  border-color: #a0a0a0 #fff #fff #a0a0a0;
  line-height: 14px;
  padding-left: 1px;
  white-space: nowrap;
}
.usb {
  width: 212px;
}
.offline {
  width: 212px;
  background: #00f;
  color: #fff;
  font: 700 11px/15px 'DejaVu Sans', Verdana, sans-serif;
}
.s1 {
  width: 20px;
}
.s2 {
  width: 28px;
}
.num {
  width: 34px;
}
.s3 {
  width: 31px;
}

/* taskbar */
.taskbar {
  height: 40px;
  flex: none;
  display: flex;
  align-items: center;
  padding-left: 8px;
  border-top: 1px solid #143048;
  box-shadow: inset 0 1px #6aaed8;
  background:
    linear-gradient(29deg, transparent 41%, #a4d0f8 50%, transparent 59%) 1060px 0 / 100px 100% no-repeat,
    linear-gradient(90deg, #1c6a9c 0, #2b88bc 6%, #2478b0 12%, #3494cc 36%, #2a88c8 50%, #2474bc 64%, #1c5ca4 80%, #184880 84%, #123a66 100%);
}
.start {
  width: 50px;
}
.quick {
  width: 61px;
  display: grid;
  place-items: center;
}
.task {
  width: 59px;
  height: 39px;
  margin-right: 3px;
  display: grid;
  place-items: center;
  border: 1px solid #18486c;
  border-radius: 3px;
  box-shadow: inset 0 0 0 1px #a8d8f0;
  background: linear-gradient(150deg, #9ccbe6, #5aa4d0 50%, #64b0dc);
}
.quick + .task {
  margin-left: 3px;
}
.task.stacked {
  padding-right: 4px;
  box-shadow: inset 0 0 0 1px #a8d8f0, inset -4px 0 #5aa4d0, inset -5px 0 #18486c;
}
.task.current {
  background: linear-gradient(150deg, #e4f2fa, #8cc4e4 50%, #a0d4f0);
}
.tray {
  margin-left: auto;
  align-self: stretch;
  display: flex;
  align-items: center;
  gap: 8px;
  color: #fff;
}
.lang {
  margin-bottom: 6px;
}
.more {
  margin: 4px 4px 0;
}
.clock {
  display: flex;
  flex-direction: column;
  align-items: center;
  justify-content: center;
  line-height: 17px;
  width: 68px;
  margin-right: -8px;
}
.desk {
  width: 14px;
  height: 39px;
  border: 1px solid #6a90b8;
  background: linear-gradient(120deg, #4a78a8, #163a64 60%);
}
</style>
